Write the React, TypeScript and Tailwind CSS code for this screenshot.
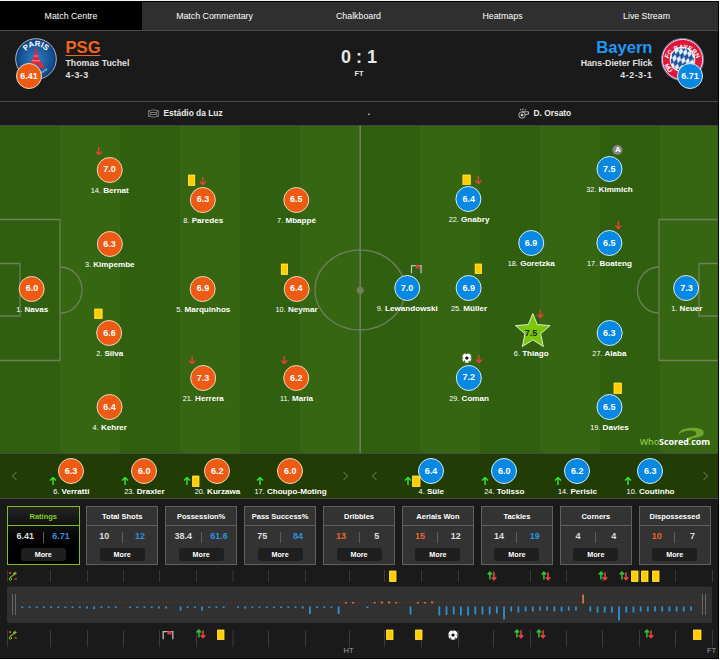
import type { ReactNode } from "react";
import clsx from "clsx";

type Side = "home" | "away";
type MarkKind = "off" | "on" | "card" | "miss" | "ball" | "assist" | "swap" | "formation";
type Mark = { kind: MarkKind; x: number; y: number };
type Player = { no: number; name: string; rating: string; side: Side; x: number; y: number; star?: boolean; marks?: Mark[] };

// x / y are the circle centre on the 718x327 pitch, marks are offsets from it
const players: Player[] = [
  { no: 1, name: "Navas", rating: "6.0", side: "home", x: 32, y: 162.5 },
  { no: 14, name: "Bernat", rating: "7.0", side: "home", x: 109.5, y: 43.5, marks: [{ kind: "off", x: -11, y: -18.5 }] },
  { no: 3, name: "Kimpembe", rating: "6.3", side: "home", x: 109.5, y: 118 },
  { no: 2, name: "Silva", rating: "6.6", side: "home", x: 109.5, y: 207, marks: [{ kind: "card", x: -11.3, y: -19.5 }] },
  { no: 4, name: "Kehrer", rating: "6.4", side: "home", x: 109.5, y: 281 },
  { no: 8, name: "Paredes", rating: "6.3", side: "home", x: 203, y: 73.5, marks: [{ kind: "card", x: -11.5, y: -19.5 }, { kind: "off", x: 0, y: -18.5 }] },
  { no: 5, name: "Marquinhos", rating: "6.9", side: "home", x: 203, y: 162.5 },
  { no: 21, name: "Herrera", rating: "7.3", side: "home", x: 203, y: 252, marks: [{ kind: "off", x: -11, y: -18.5 }] },
  { no: 7, name: "Mbappé", rating: "6.5", side: "home", x: 296.3, y: 73.5 },
  { no: 10, name: "Neymar", rating: "6.4", side: "home", x: 296.3, y: 162.5, marks: [{ kind: "card", x: -12, y: -19.5 }] },
  { no: 11, name: "María", rating: "6.2", side: "home", x: 296.3, y: 252, marks: [{ kind: "off", x: -11.7, y: -18.5 }] },
  { no: 9, name: "Lewandowski", rating: "7.0", side: "away", x: 407, y: 162, marks: [{ kind: "miss", x: 9.2, y: -19 }] },
  { no: 22, name: "Gnabry", rating: "6.4", side: "away", x: 468.8, y: 73, marks: [{ kind: "card", x: -2.3, y: -19.5 }, { kind: "off", x: 9.7, y: -19 }] },
  { no: 25, name: "Müller", rating: "6.9", side: "away", x: 468.8, y: 162, marks: [{ kind: "card", x: 9.4, y: -19.5 }] },
  { no: 29, name: "Coman", rating: "7.2", side: "away", x: 468.8, y: 251.5, marks: [{ kind: "ball", x: -2.4, y: -19.5 }, { kind: "off", x: 9.7, y: -19 }] },
  { no: 18, name: "Goretzka", rating: "6.9", side: "away", x: 531, y: 117 },
  { no: 6, name: "Thiago", rating: "7.5", side: "away", x: 531, y: 207, star: true, marks: [{ kind: "off", x: 9.5, y: -19 }] },
  { no: 32, name: "Kimmich", rating: "7.5", side: "away", x: 609.2, y: 43, marks: [{ kind: "assist", x: 8.7, y: -19.5 }] },
  { no: 17, name: "Boateng", rating: "6.5", side: "away", x: 609.2, y: 117, marks: [{ kind: "off", x: 9.2, y: -18.5 }] },
  { no: 27, name: "Alaba", rating: "6.3", side: "away", x: 609.2, y: 207 },
  { no: 19, name: "Davies", rating: "6.5", side: "away", x: 609.2, y: 281, marks: [{ kind: "card", x: 8.7, y: -19 }] },
  { no: 1, name: "Neuer", rating: "7.3", side: "away", x: 686.6, y: 162 },
];

type Sub = { no: number; name: string; rating: string; marks: Mark[] };

const homeSubs: Sub[] = [
  { no: 6, name: "Verratti", rating: "6.3", marks: [{ kind: "on", x: -18, y: 10 }] },
  { no: 23, name: "Draxler", rating: "6.0", marks: [{ kind: "on", x: -19.5, y: 10 }] },
  { no: 20, name: "Kurzawa", rating: "6.2", marks: [{ kind: "on", x: -30, y: 10 }, { kind: "card", x: -21.5, y: 10 }] },
  { no: 17, name: "Choupo-Moting", rating: "6.0", marks: [{ kind: "on", x: -30.5, y: 10 }] },
];
const awaySubs: Sub[] = [
  { no: 4, name: "Süle", rating: "6.4", marks: [{ kind: "on", x: -23.3, y: 10 }, { kind: "card", x: -15, y: 10 }] },
  { no: 24, name: "Tolisso", rating: "6.0", marks: [{ kind: "on", x: -19.5, y: 10 }] },
  { no: 14, name: "Perisic", rating: "6.2", marks: [{ kind: "on", x: -19, y: 10 }] },
  { no: 10, name: "Coutinho", rating: "6.3", marks: [{ kind: "on", x: -22, y: 10 }] },
];

const stats = [
  { title: "Ratings", home: "6.41", away: "6.71", win: "away", active: true },
  { title: "Total Shots", home: "10", away: "12", win: "away" },
  { title: "Possession%", home: "38.4", away: "61.6", win: "away" },
  { title: "Pass Success%", home: "75", away: "84", win: "away" },
  { title: "Dribbles", home: "13", away: "5", win: "home" },
  { title: "Aerials Won", home: "15", away: "12", win: "home" },
  { title: "Tackles", home: "14", away: "19", win: "away" },
  { title: "Corners", home: "4", away: "4", win: "" },
  { title: "Dispossessed", home: "10", away: "7", win: "home" },
];

const ticks = [7.5, 50.5, 87.5, 123.5, 159.5, 196.5, 233, 268.5, 305.5, 349.5, 384.5, 421.5, 458.5, 493.5, 530.5, 566.5, 602.5, 639.5, 675.5, 712.5];

// one value per interval: positive goes up (home), negative goes down (away), 0 is empty
const momentum = [
  -1, -1, -1, -1, -1, -1, -1, -1, -1, -1.5,
  -2.5, -1, -1, -1, 0, -1, -1, -1, -1, -1.5,
  -1.5, 0, -4, -1, -1, -4, -1, -1, -1, 0,
  -1, -1.5, -1, -1, -1, -1, -1, -1, -1, -1.5,
  -7.5, -1, -1, -1, -7.5, 1, 1, 0, -1, 1,
  1.5, 1.5, 1, 0, -8, 1, 1, 1.5, -9, -8.5,
  -8, -9, -9, -8, -8, -8, -7, -13, -5, -6,
  -5, -5, -4, -4, -5, -5, -4, -4, 9, -5,
  -6, -6, -6, -14, -6, -6, -5, -5, -5, -5,
  -5, -5, -5, -4,
];

const homeEvents: Mark[] = [
  { kind: "formation", x: 13, y: 576 },
  { kind: "card", x: 392.5, y: 576 },
  { kind: "swap", x: 492, y: 576 },
  { kind: "swap", x: 546.3, y: 576 },
  { kind: "swap", x: 602.5, y: 576 },
  { kind: "swap", x: 623.7, y: 576 },
  { kind: "card", x: 634.5, y: 576 },
  { kind: "card", x: 644.8, y: 576 },
  { kind: "card", x: 655.5, y: 576 },
];
const awayEvents: Mark[] = [
  { kind: "formation", x: 13, y: 634.5 },
  { kind: "miss", x: 167.5, y: 635 },
  { kind: "swap", x: 201.3, y: 634 },
  { kind: "card", x: 220.7, y: 634.5 },
  { kind: "card", x: 389.5, y: 634.5 },
  { kind: "card", x: 418.8, y: 634.5 },
  { kind: "ball", x: 453.2, y: 634.5 },
  { kind: "swap", x: 519.3, y: 634 },
  { kind: "swap", x: 540.6, y: 634 },
  { kind: "swap", x: 648.7, y: 634 },
  { kind: "card", x: 697.4, y: 634.5 },
];

function MarkIcon({ kind }: { kind: MarkKind }) {
  switch (kind) {
    case "card":
      return <div className="h-[10.5px] w-[7.5px] border border-[#ffdf3a] bg-[#ffcc00]" />;
    case "off":
      return (
        <svg width="8" height="9" viewBox="0 0 8 9" fill="none" stroke="#ee4035" strokeWidth="1.3">
          <path d="M4 0.5V8M1 5l3 3 3-3" />
        </svg>
      );
    case "on":
      return (
        <svg width="8" height="9" viewBox="0 0 8 9" fill="none" stroke="#35ea35" strokeWidth="1.4">
          <path d="M4 8.5V1M1 4l3-3 3 3" />
        </svg>
      );
    case "swap":
      return (
        <svg width="10" height="10" viewBox="0 0 10 10" fill="none" strokeWidth="1.5">
          <path d="M2.9 8.5V1.2M0.7 3.6l2.2-2.4 2.2 2.4" stroke="#2fc62f" />
          <path d="M7 1.3v7.2M4.8 6.2L7 8.6l2.3-2.4" stroke="#ea4540" />
        </svg>
      );
    case "miss":
      return (
        <svg width="12" height="9" viewBox="0 0 12 9" fill="none">
          <path d="M1.2 9V1.2h9.6V9" stroke="#bdbdbd" strokeWidth="1.3" />
          <path d="M5.6 0.6l3.6 3.2M9.200 0.600L5.600 3.800" stroke="#e53935" strokeWidth="1.6" />
        </svg>
      );
    case "ball":
      return (
        <svg width="10" height="10" viewBox="0 0 10 10">
          <circle cx="5" cy="5" r="4.8" fill="#fff" />
          <path d="M5 3.2l1.8 1.3-.7 2.1H3.9l-.7-2.1z" fill="#181818" />
          <path d="M3.8 0.3h2.4L5 1.5zM0.3 4l1.2.9-.8 1.6zM9.7 4l-1.2.9.8 1.6zM2 8.6l.4-1.3 1.5 1.9zM8 8.6l-.4-1.3-1.5 1.9z" fill="#181818" />
        </svg>
      );
    case "assist":
      return (
        <div className="flex size-[10px] items-center justify-center rounded-full bg-[#858585] text-[8px] leading-none font-bold text-white">A</div>
      );
    case "formation":
      return (
        <svg width="10" height="10" viewBox="0 0 10 10" fill="none">
          <path d="M2.2 7C2.4 4.6 6.5 5 6.8 2.4M5.2 2.4h3.4M7 0.8v3.2" stroke="#86bd24" strokeWidth="1.1" />
          <circle cx="2.4" cy="8" r="1.2" stroke="#86bd24" strokeWidth="1" />
          <path d="M1 1l2 2M3 1L1 3M6.6 7l2 2M8.6 7l-2 2" stroke="#c8501e" strokeWidth="1" />
        </svg>
      );
  }
}

// Centres an icon on a point of the nearest positioned parent
function Pin({ x, y, children }: { x: number; y: number; children: ReactNode }) {
  return (
    <div className="absolute flex -translate-x-1/2 -translate-y-1/2" style={{ left: x, top: y }}>
      {children}
    </div>
  );
}

function Rating({ value, side, marks = [], star }: { value: string; side: Side; marks?: Mark[]; star?: boolean }) {
  return (
    <div className="relative flex size-[26px] items-center justify-center">
      {star ? (
        <svg className="absolute -top-[8px] -left-[5px]" width="38" height="36" viewBox="0 0 38 36">
          <path d="M19.5 1.5L24 12.6L36.8 13.6L27.300 21.800L30 34.500L19.500 27.900L9 34.500L11.700 21.800L2.200 13.600L15 12.600Z" fill="#7ac80c" stroke="#dfe8c8" strokeWidth="1" />
        </svg>
      ) : (
        <div className={clsx("absolute inset-0 rounded-full border", side === "home" ? "border-[#ecd9b8] bg-[#ec5a13]" : "border-[#d5ecf0] bg-[#0788e2]")} />
      )}
      <span className={clsx("relative text-[9px] leading-none font-bold", star ? "text-[#1c2a08]" : "text-white")}>{value}</span>
      {marks.map((m, i) => (
        <Pin key={i} x={13 + m.x} y={13 + m.y}>
          <MarkIcon kind={m.kind} />
        </Pin>
      ))}
    </div>
  );
}

function Label({ no, name }: { no: number; name: string }) {
  return (
    <div className="pl-[0.5px] text-[8.1px] leading-[10px] font-bold whitespace-nowrap text-white">
      <span className="text-[7.3px] font-normal">{no}.</span> {name}
    </div>
  );
}

function TeamBadge({ side }: { side: Side }) {
  return side === "home" ? (
    <svg width="42" height="42" viewBox="0 0 42 42">
      <defs>
        <path id="psg-arc" d="M8.2 21a12.800 12.800 0 0 1 25.600 0" />
        <radialGradient id="psg-bg">
          <stop offset="0" stopColor="#2f80c0" />
          <stop offset="1" stopColor="#0f4484" />
        </radialGradient>
      </defs>
      <circle cx="21" cy="21" r="20.3" fill="url(#psg-bg)" stroke="#a9b9c4" strokeWidth="1" />
      <circle cx="21" cy="21" r="18.8" fill="none" stroke="#123d70" strokeWidth="1" />
      <text fill="#fff" fontSize="7.8" fontWeight="bold" textAnchor="middle">
        <textPath href="#psg-arc" startOffset="50%">PARIS</textPath>
      </text>
      <path d="M20.500 10h1l1.200 7 2 5 5.300 8h-5l-2.200-3.800h-3.600L17 30h-5l5.300-8 2-5z" fill="#e0263a" />
      <path d="M16.800 22.800h8.400M18.600 18h4.800" stroke="#f3c4c8" strokeWidth=".7" />
      <path d="M26 35l6-4" stroke="#9fc0dc" strokeWidth="1.800" strokeDasharray="1.200 .8" />
    </svg>
  ) : (
    <svg width="43" height="43" viewBox="0 0 42 42">
      <defs>
        <path id="fcb-top" d="M6.500 23a14.700 14.700 0 0 1 29 0" />
        <path id="fcb-bottom" d="M2.600 21a18.400 18.400 0 0 0 36.800 0" />
        <pattern id="fcb-check" width="4.400" height="8" patternUnits="userSpaceOnUse" patternTransform="rotate(14)">
          <rect width="4.400" height="8" fill="#e8eef6" />
          <path d="M2.200 0l2.200 4-2.200 4L0 4z" fill="#17509a" />
        </pattern>
      </defs>
      <circle cx="21" cy="21" r="20.600" fill="#de1638" stroke="#5588c4" strokeWidth=".9" />
      <circle cx="21" cy="21" r="19.600" fill="none" stroke="#fff" strokeWidth=".8" />
      <circle cx="21" cy="21" r="12" fill="url(#fcb-check)" stroke="#fff" strokeWidth="1" />
      <text fill="#fff" fontSize="6.200" fontWeight="bold" textAnchor="middle">
        <textPath href="#fcb-top" startOffset="50%">FC BAYERN</textPath>
      </text>
      <text fill="#fff" fontSize="6.200" fontWeight="bold">
        <textPath href="#fcb-bottom" startOffset="5">MÜ</textPath>
      </text>
    </svg>
  );
}

function TeamHeader({ side, name, coach, formation, rating }: { side: Side; name: string; coach: string; formation: string; rating: string }) {
  const home = side === "home";
  return (
    <div className={clsx("flex", home ? "gap-[8.500px] pl-[15px]" : "flex-row-reverse gap-[8.500px] pr-[14px] text-right")}>
      <div className="relative mt-[7px] h-[43px]">
        <TeamBadge side={side} />
        <div className={clsx("absolute top-[25px]", home ? "left-[1px]" : "right-[1px]")}>
          <Rating value={rating} side={side} />
        </div>
      </div>
      <div className="mt-[7px] text-[8.800px] leading-[12px] font-bold text-[#e0e0e0]">
        <div className={clsx("text-[16.6px] leading-[19px]", home ? "text-[#f2651f] underline underline-offset-2" : "text-[#2196f3]")}>{name}</div>
        <div>{coach}</div>
        <div className="tracking-[0.55px]">{formation}</div>
      </div>
    </div>
  );
}

function Pitch() {
  return (
    <div className="relative h-[327px] overflow-hidden bg-[#30600f]">
      <svg className="block" width="718" height="327" viewBox="0 0 718 327" fill="none">
        {[60, 180, 300, 420, 540, 660].map((x) => (
          <rect key={x} x={x} width="60" height="327" fill="#366612" />
        ))}
        <g stroke="#6d7f5b" strokeWidth="1.3">
          <path d="M0 93.500H60V234.500H0M0 137.500H20V190H0M60.500 141A21.500 23 0 0 1 60.500 187" />
          <path d="M718 93.500H659V234.500H718M718 137.500H699V190H718M658.500 141A21 23 0 0 0 658.500 187" />
          <path d="M360.200 0V327" strokeWidth="1.600" />
          <ellipse cx="360" cy="164" rx="45" ry="40" />
        </g>
        <circle cx="360.200" cy="164.300" r="3.500" fill="#6d7f5b" />
      </svg>
      {players.map((p) => (
        <div key={p.name} className="absolute -mt-[13px] flex -translate-x-1/2 flex-col items-center gap-[3px]" style={{ left: p.x, top: p.y }}>
          <Rating value={p.rating} side={p.side} marks={p.marks} star={p.star} />
          <Label no={p.no} name={p.name} />
        </div>
      ))}
      <div className="absolute right-[8px] bottom-[4px] font-['Open_Sans',sans-serif] text-[9px] leading-[14px] font-bold tracking-[-0.1px] text-white">
        <svg className="absolute -top-[8px] left-[38px]" width="27" height="19" viewBox="0 0 28 20">
          <path d="M0.500 7.500C1 3 8 0.800 15 0.800c7 0 12 2 12 5.200 0 3.300-4.500 4.800-9 5.300-3 .3-4.300 1-4.300 2.700H10c0-2.500 1.500-3.600 5-4.200 2.800-.5 4-1.300 4-2.900 0-2-2.500-3.200-6-3.200C8 3.700 4 5 .5 7.500z" fill="#6fa62e" />
        </svg>
        <span className="relative">
          <span className="font-semibold text-[#8cc63f]">Who</span>Scored<span className="text-[#8cc63f]">.</span>com
        </span>
      </div>
    </div>
  );
}

function Chevron({ dir }: { dir: "left" | "right" }) {
  return (
    <div className="flex h-[43px] w-[29px] shrink-0 items-center justify-center">
      <svg width="7" height="10" viewBox="0 0 7 10" fill="none" stroke="#50693a" strokeWidth="1.300">
        <path d={dir === "left" ? "M5.500 1L1.500 5l4 4" : "M1.500 1l4 4-4 4"} />
      </svg>
    </div>
  );
}

function Bench({ side, subs }: { side: Side; subs: Sub[] }) {
  return (
    <div className="flex w-[360px] shrink-0 items-start">
      <Chevron dir="left" />
      <div className="flex pr-[4px] pl-[5.500px]">
        {subs.map((s) => (
          <div key={s.name} className="flex w-[73.100px] flex-col items-center gap-[2.500px] pt-[4px]">
            <Rating value={s.rating} side={side} marks={s.marks} />
            <Label no={s.no} name={s.name} />
          </div>
        ))}
      </div>
      <Chevron dir="right" />
    </div>
  );
}

function StatBox({ title, home, away, win, active }: { title: string; home: string; away: string; win: string; active?: boolean }) {
  return (
    <div className={clsx("h-[59px] w-[72.500px] border text-center font-bold", active ? "border-[#82bd22] bg-linear-to-b from-[#242424] to-black" : "border-[#606060] bg-[#333333]")}>
      <div className={clsx("h-[19px] border-b text-[7.500px] leading-[19px] whitespace-nowrap", active ? "border-[#82bd22] text-[#86cc1a]" : "border-[#606060] text-white")}>{title}</div>
      <div className="flex h-[22px] items-center text-[9px]">
        <span className={clsx("flex-1", win === "home" ? "text-[#e8642a]" : "text-[#dedede]")}>{home}</span>
        <span className="h-[11px] w-px bg-[#5c5c5c]" />
        <span className={clsx("flex-1", win === "away" ? "text-[#3190dc]" : "text-[#dedede]")}>{away}</span>
      </div>
      <div className="mx-auto h-[13px] w-[45px] rounded-[3px] bg-[#1f1f1f] text-[7.200px] leading-[13px] text-white">More</div>
    </div>
  );
}

function Timeline() {
  return (
    <div className="relative h-[93px]">
      <svg className="block" width="717" height="93" viewBox="0 565 717 93">
        {ticks.map((x) => (
          <path key={x} d={`M${x} 570V582M${x} 630V647`} stroke="#3a3a3a" />
        ))}
        <rect x="7" y="586.500" width="705" height="36.500" rx="2" fill="#313131" />
        <path d="M22 602.500H698" stroke="#59382c" strokeDasharray="2 2" strokeWidth=".8" />
        <path d="M12.500 594V615M15.500 594V615M702.500 594V615M705.500 594V615" stroke="#666" />
        {momentum.map((v, i) => {
          const x = 22.300 + i * 7.190;
          const small = Math.abs(v) < 2;
          const w = small ? 2 : 1.800;
          const h = small ? Math.abs(v) + 0.5 : Math.abs(v);
          return v === 0 ? null : v > 0 ? (
            <rect key={i} x={x - w / 2} y={603.500 - h} width={w} height={h} fill="#d9713f" />
          ) : (
            <rect key={i} x={x - w / 2} y={606.500} width={w} height={h} fill="#2f8fd2" />
          );
        })}
      </svg>
      {[...homeEvents, ...awayEvents].map((e, i) => (
        <Pin key={i} x={e.x} y={e.y - 565}>
          <MarkIcon kind={e.kind} />
        </Pin>
      ))}
      <div className="absolute top-[81px] left-[343.500px] text-[7.500px] leading-[10px] text-[#a0a0a0]">HT</div>
      <div className="absolute top-[81px] left-[707px] text-[7.500px] leading-[10px] text-[#a0a0a0]">FT</div>
    </div>
  );
}

export default function App() {
  return (
    <div className="h-[660px] w-[720px] overflow-hidden bg-[#f4f6f5] pt-px font-['Liberation_Sans',Arial,sans-serif]">
      <div className="w-[719px] border-t border-r border-b border-black bg-[#1a1a1a]">
        <nav className="flex h-[29px] border-b border-[#4a4a4a] bg-[#2f2f2f] text-center text-[8.800px] leading-[28px] text-white">
          <div className="w-[142px] bg-black">Match Centre</div>
          {["Match Commentary", "Chalkboard", "Heatmaps", "Live Stream"].map((t) => (
            <div key={t} className="flex-1 pl-px">{t}</div>
          ))}
        </nav>

        <header className="grid h-[71px] grid-cols-[1fr_60px_1fr] border-b border-[#4a4a4a]">
          <TeamHeader side="home" name="PSG" coach="Thomas Tuchel" formation="4-3-3" rating="6.41" />
          <div className="pt-[16px] text-center font-bold text-[#e6e6e6]">
            <div className="text-[18px] leading-[20px]">0 : 1</div>
            <div className="mt-[2px] text-[7.500px] leading-[10px]">FT</div>
          </div>
          <TeamHeader side="away" name="Bayern" coach="Hans-Dieter Flick" formation="4-2-3-1" rating="6.71" />
        </header>

        <div className="grid h-[24px] grid-cols-[370px_1fr] border-b border-[#46434b] text-[8.400px] font-bold text-[#ececec]">
          <div className="flex items-center pl-[148px]">
            <svg className="mr-[4.500px]" width="11" height="9" viewBox="0 0 11 9" fill="none" stroke="#8d8d8d" strokeWidth=".8">
              <path d="M0.600 1.800Q5.500 -.2 10.400 1.800V7.200Q5.500 9.200 .6 7.200z" />
              <path d="M2.500 3.500h6v2h-6zM.6 1.800l1.900 1.700M10.400 1.800L8.500 3.500M.6 7.200l1.900-1.700M10.400 7.200L8.500 5.500" />
            </svg>
            <span className="flex-1">Estádio da Luz</span>
            <span className="pb-[3px]">.</span>
          </div>
          <div className="flex items-center pl-[147.500px]">
            <svg className="mr-[5px]" width="11" height="11" viewBox="0 0 11 11" fill="none" stroke="#c4c4c4" strokeWidth=".9">
              <circle cx="4" cy="7" r="3.200" />
              <circle cx="4" cy="7" r="1" fill="#fff" />
              <path d="M4 3.800h6.500v2.400L7 6.600M3 2.400L2.400 1M5 2.200V.5M7 2.500L7.900 1.200" />
            </svg>
            D. Orsato
          </div>
        </div>

        <Pitch />

        <div className="flex h-[46px] border-t border-b border-[#4b4b45] bg-[#223c05]">
          <Bench side="home" subs={homeSubs} />
          <Bench side="away" subs={awaySubs} />
        </div>

        <div className="flex justify-between pt-[7px] pr-[7px] pl-[7px]">
          {stats.map((s) => (
            <StatBox key={s.title} {...s} />
          ))}
        </div>

        <Timeline />
      </div>
    </div>
  );
}
